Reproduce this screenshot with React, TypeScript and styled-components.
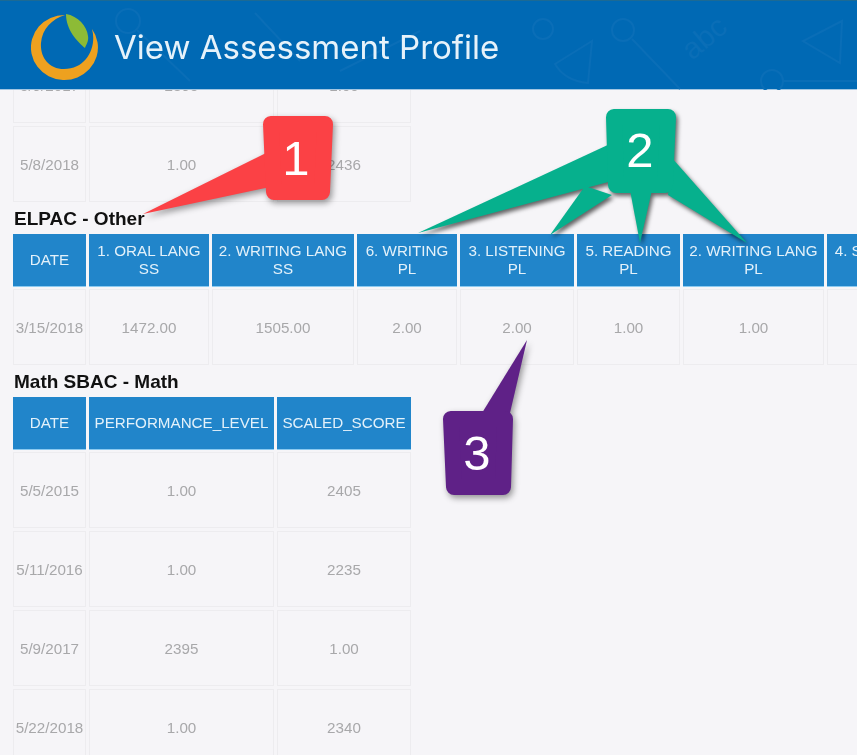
import React from "react";
import styled, { createGlobalStyle } from "styled-components";

interface AssessmentTable {
  title?: string;
  rowHeight: number;
  columns: { label: string; width: number }[];
  rows: string[][];
}

const mathColumns = [
  { label: "DATE", width: 73 },
  { label: "PERFORMANCE_LEVEL", width: 185 },
  { label: "SCALED_SCORE", width: 134 },
];

const assessments: AssessmentTable[] = [
  {
    rowHeight: 76,
    columns: mathColumns,
    rows: [
      ["5/9/2017", "2395", "1.00"],
      ["5/8/2018", "1.00", "2436"],
    ],
  },
  {
    title: "ELPAC - Other",
    rowHeight: 76,
    columns: [
      { label: "DATE", width: 73 },
      { label: "1. ORAL LANG SS", width: 120 },
      { label: "2. WRITING LANG SS", width: 142 },
      { label: "6. WRITING PL", width: 100 },
      { label: "3. LISTENING PL", width: 114 },
      { label: "5. READING PL", width: 103 },
      { label: "2. WRITING LANG PL", width: 141 },
      { label: "4. SPEAKING PL", width: 110 },
    ],
    rows: [["3/15/2018", "1472.00", "1505.00", "2.00", "2.00", "1.00", "1.00", "1.00"]],
  },
  {
    title: "Math SBAC - Math",
    rowHeight: 76,
    columns: mathColumns,
    rows: [
      ["5/5/2015", "1.00", "2405"],
      ["5/11/2016", "1.00", "2235"],
      ["5/9/2017", "2395", "1.00"],
      ["5/22/2018", "1.00", "2340"],
    ],
  },
];

const GlobalStyle = createGlobalStyle`
  html, body {
    margin: 0;
    padding: 0;
    overflow: hidden;
    background: #f6f5f8;
  }
`;

const Page = styled.div`
  position: relative;
  width: 857px;
  height: 755px;
  overflow: hidden;
  background: #f6f5f8;
  font-family: "Liberation Sans", Arial, sans-serif;
`;

const Header = styled.header`
  position: relative;
  z-index: 2;
  box-sizing: border-box;
  height: 90px;
  display: flex;
  align-items: center;
  gap: 15px;
  padding: 4px 0 1px 31px;
  background: #0069b4;
  border-top: 1px solid #1c6a94;
  border-bottom: 1px solid #a3c6e2;
`;

const Doodles = styled.svg`
  position: absolute;
  left: 0;
  top: 0;
  width: 857px;
  height: 89px;
  fill: none;
  stroke: #0a6eb7;
  stroke-width: 2;
`;

const DoodleText = styled.text`
  fill: #0a6eb7;
  stroke: none;
  font-family: "Liberation Sans", Arial, sans-serif;
  font-size: 30px;
`;

const Logo = styled.svg`
  position: relative;
  flex: none;
  width: 68px;
  height: 66px;
  filter: blur(0.3px);
`;

const Title = styled.h1`
  position: relative;
  margin: 0;
  color: #e6f2fa;
  font-family: Inter, sans-serif;
  font-size: 33px;
  font-weight: 400;
  white-space: nowrap;
  filter: blur(0.3px);
`;

const Main = styled.main`
  margin-top: -46px;
  padding-left: 10px;
  filter: blur(0.35px);
`;

const SectionTitle = styled.h2`
  margin: 0;
  padding-left: 4px;
  height: 26px;
  color: #111;
  font-size: 19px;
  font-weight: 700;
  line-height: 28px;
`;

const Table = styled.table<{ $width: number }>`
  width: ${(p) => p.$width}px;
  border-collapse: separate;
  border-spacing: 3px;
  table-layout: fixed;
`;

const Column = styled.col<{ $width: number }>`
  width: ${(p) => p.$width}px;
`;

const HeadCell = styled.th`
  box-sizing: border-box;
  height: 52px;
  padding: 0 4px;
  background: #2185ca;
  box-shadow: 0 1px 0 #8ccaf0;
  color: #e3f1fa;
  font-size: 15.2px;
  font-weight: 400;
  line-height: 18px;
  text-align: center;
`;

const Cell = styled.td<{ $height: number }>`
  box-sizing: border-box;
  height: ${(p) => p.$height}px;
  padding: 0;
  border: 1px solid #edecef;
  color: #a8a8aa;
  font-size: 15.2px;
  text-align: center;
`;

const Annotations = styled.svg`
  position: absolute;
  left: 0;
  top: 0;
  z-index: 3;
  width: 857px;
  height: 755px;
`;

const Callout = styled.g<{ $color: string; $shadow: string }>`
  fill: ${(p) => p.$color};
  stroke: ${(p) => p.$color};
  stroke-width: 0;
  filter: drop-shadow(${(p) => p.$shadow});
`;

const CalloutBody = styled.polygon`
  stroke-width: 16;
  stroke-linejoin: round;
`;

const CalloutNumber = styled.span<{ $x: number; $y: number }>`
  position: absolute;
  z-index: 4;
  left: ${(p) => p.$x}px;
  top: ${(p) => p.$y}px;
  width: 60px;
  color: #fff;
  font-size: 49px;
  line-height: 56px;
  text-align: center;
`;

const callouts = [
  {
    color: "#fb4145",
    shadow: "2px 3px 3px rgba(0,0,0,0.4)",
    body: "271,124 325,124 322,192 274,192",
    tails: ["266,153 143,214 270,187"],
  },
  {
    color: "#06b08d",
    shadow: "2px 3px 2px rgba(0,0,0,0.6)",
    body: "614,117 668,117 665,185 616,185",
    tails: [
      "612,143 418,233 612,181",
      "585,186 550,235 612,195",
      "630,190 640,243 652,190",
      "672,158 747,243 668,195",
    ],
  },
  {
    color: "#5f2187",
    shadow: "2px 3px 3px rgba(0,0,0,0.4)",
    body: "451,419 505,419 503,487 454,487",
    tails: ["482,413 527,340 510,413"],
  },
];

export default function App() {
  return (
    <Page>
      <GlobalStyle />
      <Header>
        <Doodles viewBox="0 0 857 89">
          <circle cx="128" cy="20" r="12" />
          <path d="M137 29 L190 80" />
          <path d="M255 12 L300 60 M340 70 L420 30" />
          <circle cx="543" cy="28" r="10" />
          <path d="M592 40 L555 63 Q565 80 588 82 Z" />
          <circle cx="623" cy="29" r="11" />
          <path d="M632 38 L680 88" />
          <path d="M842 20 L803 40 L840 62 Z" />
          <circle cx="772" cy="80" r="11" />
          <path d="M783 80 L857 80" />
          <DoodleText transform="translate(692 60) rotate(-40)">abc</DoodleText>
        </Doodles>
        <Logo viewBox="0 0 68 66">
          <path fill="#eea11f" d="M34 1 A33.5 32.5 0 1 0 61 15 C66 32 56 55 33 55 C17 55 9 42 10 29 C11 15 21 5 34 1 Z" />
          <path fill="#8dbb36" d="M35 0 C47 2 56 12 57 22 C58 27 55 31 54 34 C46 27 35 16 35 0 Z" />
        </Logo>
        <Title>View Assessment Profile</Title>
      </Header>
      <Main>
        {assessments.map((table, t) => (
          <section key={t}>
            {table.title && <SectionTitle>{table.title}</SectionTitle>}
            <Table $width={table.columns.reduce((sum, c) => sum + c.width + 3, 3)}>
              <colgroup>
                {table.columns.map((c) => (
                  <Column key={c.label} $width={c.width} />
                ))}
              </colgroup>
              {table.title && (
                <thead>
                  <tr>
                    {table.columns.map((c) => (
                      <HeadCell key={c.label}>{c.label}</HeadCell>
                    ))}
                  </tr>
                </thead>
              )}
              <tbody>
                {table.rows.map((row, r) => (
                  <tr key={r}>
                    {row.map((value, v) => (
                      <Cell key={v} $height={table.rowHeight}>{value}</Cell>
                    ))}
                  </tr>
                ))}
              </tbody>
            </Table>
          </section>
        ))}
      </Main>
      <Annotations viewBox="0 0 857 755">
        {callouts.map((c) => (
          <Callout key={c.color} $color={c.color} $shadow={c.shadow}>
            {c.tails.map((points) => (
              <polygon key={points} points={points} />
            ))}
            <CalloutBody points={c.body} />
          </Callout>
        ))}
      </Annotations>
      <CalloutNumber $x={266} $y={130}>1</CalloutNumber>
      <CalloutNumber $x={610} $y={122}>2</CalloutNumber>
      <CalloutNumber $x={447} $y={425}>3</CalloutNumber>
    </Page>
  );
}
